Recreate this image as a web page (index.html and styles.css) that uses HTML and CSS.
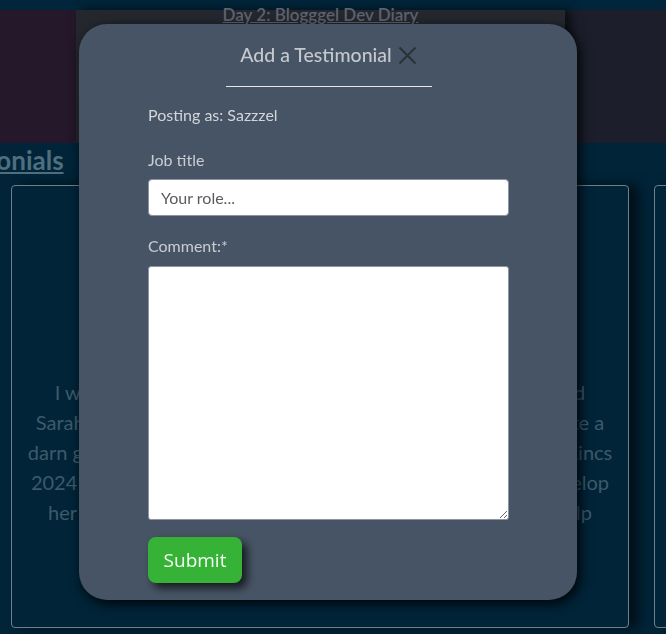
FILE: index.html
```html
<!DOCTYPE html>
<html lang="en">
<head>
<meta charset="utf-8">
<title>Add a Testimonial</title>
<link rel="stylesheet" href="styles.css">
</head>
<body>
<div class="topbar"></div>
<section class="hero">
  <div class="hero-left"></div>
  <div class="hero-card">
    <a class="hero-link" href="#">Day 2: Blogggel Dev Diary</a>
    <div class="hero-blob"></div>
  </div>
  <div class="hero-right"></div>
</section>
<section class="testimonials">
  <h2 class="section-title"><a href="#">Testimonials</a></h2>
  <div class="track">
    <article class="card">
      <p class="quote">I was so fortunate to work with Sarah on a project and found<br>Sarah to be an absolute pleasure to work alongside, she is quite a<br>darn good developer and she built the brand new website for Rincs<br>2024 which went live without a hitch. She also helped me develop<br>her own skills in web design and she was always happy to help</p>
    </article>
    <article class="card"></article>
  </div>
</section>

<div class="modal" role="dialog" aria-label="Add a Testimonial">
  <div class="modal-head">
    <h3 class="modal-title">Add a Testimonial</h3>
    <button class="close" aria-label="Close">
      <svg width="19" height="19" viewBox="0 0 19 19"><path d="M1.5 1.5 L17.5 17.5 M17.5 1.5 L1.5 17.5" stroke="#2a3038" stroke-width="2" fill="none"/></svg>
    </button>
  </div>
  <hr class="rule">
  <form class="form">
    <p class="posting">Posting as: Sazzzel</p>
    <label class="label" for="job">Job title</label>
    <input class="input" id="job" type="text" placeholder="Your role...">
    <label class="label label-comment" for="comment">Comment:*</label>
    <textarea class="textarea" id="comment"></textarea>
    <button class="submit" type="button">Submit</button>
  </form>
</div>
</body>
</html>
```

FILE: styles.css
```css
* { box-sizing: border-box; }
html, body { margin: 0; padding: 0; }
body {
  background: #012438;
  font-family: "Source Sans Pro", Lato, "Noto Sans", sans-serif;
  width: 666px;
  height: 634px;
  overflow: hidden;
}
.topbar { height: 10px; background: #01253a; }
.hero { display: flex; height: 133px; }
.hero-left { width: 76px; background: #24182a; }
.hero-card {
  width: 489px;
  background: #24272e;
  position: relative;
  text-align: center;
  box-shadow: 6px 0 10px rgba(0,0,0,0.6);
}
.hero-link {
  display: block;
  width: fit-content;
  margin: -5px auto 0;
  color: #5d6370;
  font-weight: 600;
  font-size: 17px;
  line-height: 20px;
}
.hero-blob {
  position: absolute;
  left: 2px; top: 25px;
  width: 60px; height: 90px;
  border-radius: 30px;
  background: #2c3039;
}
.hero-right { flex: 1; background: #1c1f2b; }

.section-title {
  margin: 0 0 0 -80px;
  height: 42px;
  font-size: 26px;
  line-height: 34px;
  font-weight: 700;
  white-space: nowrap;
}
.section-title a { color: #4f6f80; }
.track { display: flex; gap: 25px; padding-left: 11px; }
.card {
  flex: 0 0 618px;
  height: 443px;
  border: 1px solid #6f7f88;
  border-radius: 4px;
  box-shadow: 10px 0 12px rgba(0,0,0,0.55);
  padding-top: 191px;
}
.quote {
  margin: 0;
  text-align: center;
  color: #3d5a6a;
  font-size: 20px;
  line-height: 30px;
  white-space: nowrap;
}

.modal {
  position: fixed;
  z-index: 10;
  left: 79px; top: 24px;
  width: 498px; height: 576px;
  background: #475465;
  border-radius: 28px;
  box-shadow: 3px 4px 12px rgba(0,0,0,0.85);
  padding: 20px 68px 0 69px;
}
.modal-head {
  display: flex;
  justify-content: center;
  align-items: center;
  gap: 6px;
  height: 22px;
}
.modal-title {
  margin: 0;
  font-size: 19.5px;
  font-weight: 500;
  color: #c4c9ce;
  line-height: 22px;
}
.close {
  background: none; border: 0; padding: 0; margin: 0;
  width: 19px; height: 19px;
  display: flex;
}
.rule {
  width: 206px;
  margin: 20px auto 0;
  border: 0;
  border-top: 1px solid #e6e6e6;
  height: 0;
}
.form { display: flex; flex-direction: column; align-items: flex-start; }
.posting {
  margin: 18px 0 0;
  font-size: 16px;
  line-height: 20px;
  color: #d1d5d9;
}
.label {
  font-size: 16px;
  line-height: 20px;
  color: #c9cdd1;
  margin-top: 25px;
}
.label-comment { margin-top: 20px; }
.input {
  margin-top: 9px;
  width: 361px;
  height: 37px;
  border: 1px solid #8a95a0;
  border-radius: 4px;
  background: #fff;
  padding: 0 12px;
  font-family: inherit;
  font-size: 16px;
}
.input::placeholder { color: #5c5c5c; }
.textarea {
  margin-top: 10px;
  width: 361px;
  height: 254px;
  border: 1px solid #8a95a0;
  border-radius: 3px;
  background: #fff;
  resize: vertical;
}
.submit {
  margin-top: 17px;
  width: 94px;
  height: 46px;
  border: 0;
  border-radius: 8px;
  background: #36b236;
  color: #f4fff4;
  font-family: "Open Sans", sans-serif;
  font-size: 19px;
  box-shadow: 5px 5px 8px rgba(0,0,0,0.7);
  padding: 0;
}
```
